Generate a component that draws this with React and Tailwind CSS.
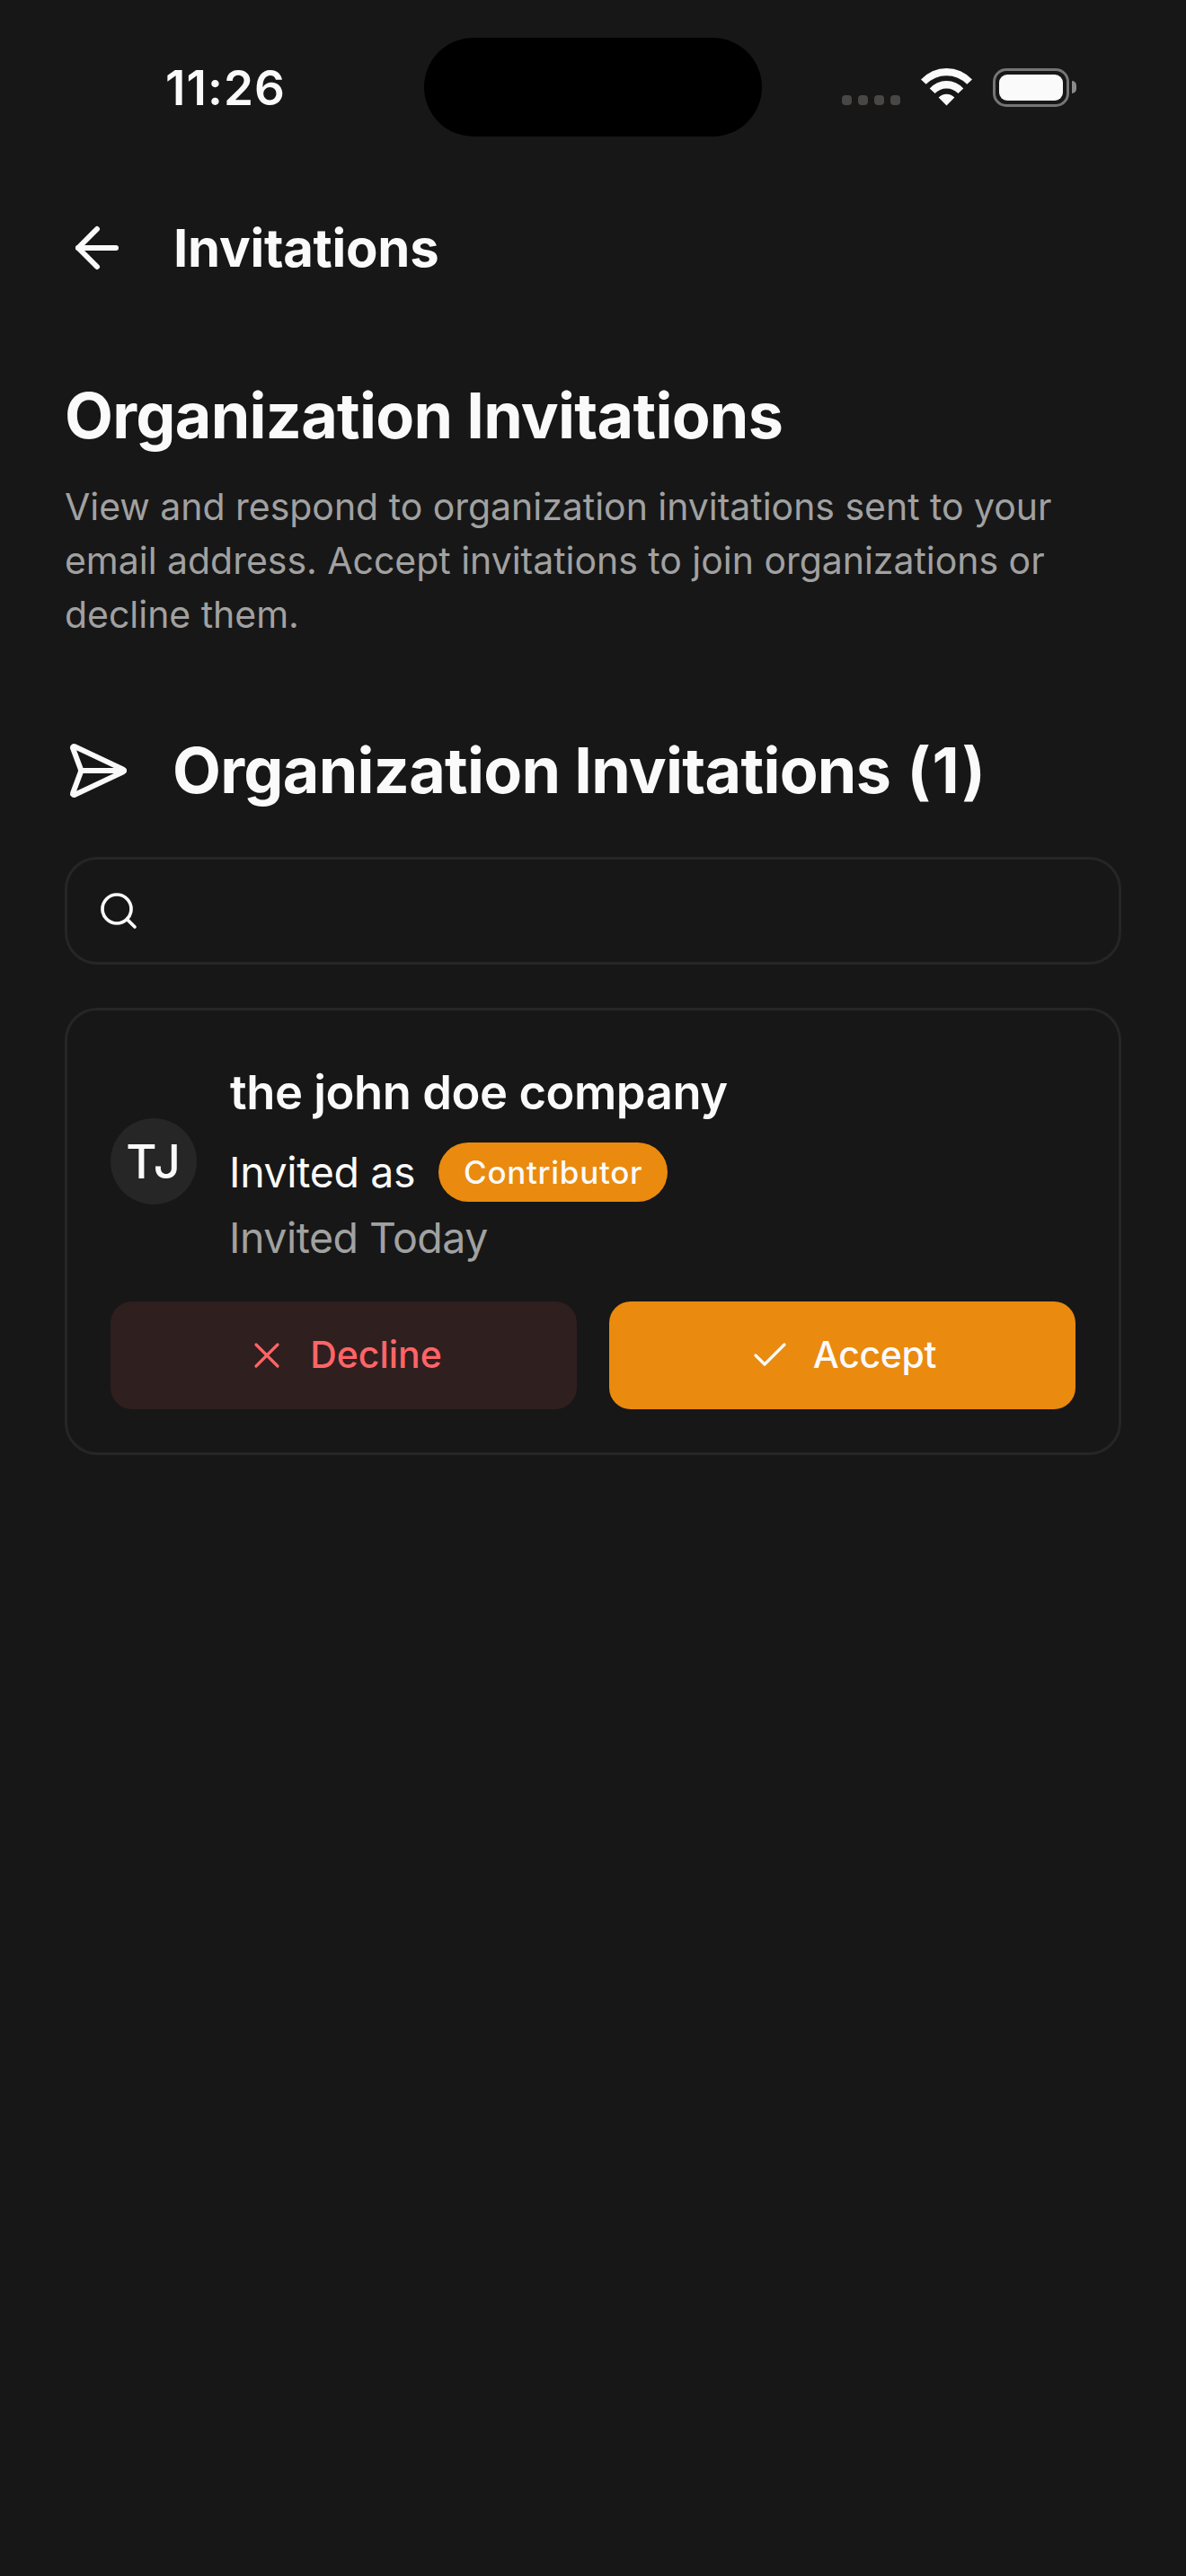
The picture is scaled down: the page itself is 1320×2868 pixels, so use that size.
import React from "react";
import { ArrowLeft, Check, Search, SendHorizontal, X } from "lucide-react";

function WifiIcon() {
  return (
    <svg width="60" height="45" viewBox="0 0 60 45" fill="currentColor">
      <path d="M1 14.6 A38.5 38.5 0 0 1 58 14.6 L52.3 19.8 A32 32 0 0 0 6.7 19.8 Z" />
      <path d="M10.7 24.6 A25 25 0 0 1 48.3 24.6 L42.4 30 A18 18 0 0 0 16.6 30 Z" />
      <path d="M20.6 34.6 A12 12 0 0 1 38.4 34.6 L29.5 43.4 Z" />
    </svg>
  );
}

function Battery() {
  return (
    <div className="flex items-center gap-[3px]">
      <div className="h-[43px] w-[85px] rounded-[15px] border-[3px] border-[#757575] p-1">
        <div className="h-full w-full rounded-[9px] bg-[#fafafa]" />
      </div>
      <div className="h-[14px] w-[5px] rounded-r-full bg-[#8a8a8a]" />
    </div>
  );
}

function StatusBar() {
  return (
    <div className="relative flex h-[240px] items-start justify-between pl-[184px] pr-[122px]">
      <div className="mt-[58px] text-[53px] font-semibold leading-[80px] tracking-[1.06px]">11:26</div>
      <div className="absolute left-[472px] top-[42px] h-[110px] w-[376px] rounded-full bg-black" />
      <div className="mt-[75px] flex">
        <div className="mr-[22px] mt-[31px] flex gap-[7px]">
          {[0, 1, 2, 3].map((i) => (
            <div key={i} className="size-[11px] rounded-[4px] bg-[#484745]" />
          ))}
        </div>
        <div className="-mt-px mr-[21px]">
          <WifiIcon />
        </div>
        <Battery />
      </div>
    </div>
  );
}

export default function App() {
  return (
    <div className="min-h-[2868px] w-[1320px] bg-[#171717] font-['Inter',sans-serif] text-[#fafafa]">
      <StatusBar />

      <header className="flex h-[72px] items-center gap-12 px-[72px]">
        <ArrowLeft size={72} strokeWidth={2} />
        <h1 className="pl-px text-[58px] font-bold leading-[73px] tracking-[-0.25px]">Invitations</h1>
      </header>

      <main className="px-[72px] pt-[115px]">
        <h2 className="text-[70px] font-bold leading-[72px] tracking-[-0.72px]">Organization Invitations</h2>
        <p className="mt-[35px] text-[41px] leading-[60px] tracking-[-0.03px] text-[#a1a1a1]">
          View and respond to organization invitations sent to your
          <br />
          email address. Accept invitations to join organizations or
          <br />
          decline them.
        </p>

        <div className="mt-[108px] flex h-[72px] items-center gap-12">
          <SendHorizontal size={72} strokeWidth={2} />
          <h2 className="whitespace-pre text-[70px] font-bold leading-[72px] tracking-[-0.72px]">
            Organization Invitations<span className="tracking-[1.6px]"> (1)</span>
          </h2>
        </div>

        <div className="mt-[60px] flex h-[120px] items-center rounded-[36px] border-[3px] border-[#262626] px-[33px]">
          <Search size={48} strokeWidth={1.85} />
        </div>

        <section className="mt-12 h-[498px] rounded-[36px] border-[3px] border-[#262626] p-12">
          <div className="flex h-[240px] items-center gap-9">
            <div className="flex size-24 shrink-0 items-center justify-center rounded-full bg-[#262626] text-[52.5px] font-medium leading-none tracking-[0.8px]">
              TJ
            </div>
            <div className="flex h-[240px] flex-col">
              <div className="h-[86px] pl-px text-[52.5px] font-semibold leading-[86px] tracking-[-0.45px]">
                the john doe company
              </div>
              <div className="mt-[13px] flex h-[66px] items-center gap-[26px]">
                <span className="text-[46.5px] leading-[66px] tracking-[-0.36px]">Invited as</span>
                <span className="flex h-[66px] w-[255px] items-center justify-center rounded-full bg-[#ea8a0e] text-[35px] font-medium tracking-[0.7px]">
                  Contributor
                </span>
              </div>
              <div className="mt-[3px] text-[46.5px] leading-[74px] tracking-[-0.5px] text-[#a1a1a1]">
                Invited Today
              </div>
            </div>
          </div>

          <div className="mt-9 grid grid-cols-2 gap-9 text-[41px] font-medium">
            <button className="flex h-[120px] items-center justify-center gap-6 rounded-[24px] bg-[#2f1f1f] tracking-[-0.03px] text-[#ff6467]">
              <X size={48} strokeWidth={1.6} />
              <span>Decline</span>
            </button>
            <button className="flex h-[120px] items-center justify-center gap-6 rounded-[24px] bg-[#ea8a0e] tracking-[-0.34px]">
              <Check size={48} strokeWidth={1.6} />
              <span>Accept</span>
            </button>
          </div>
        </section>
      </main>
    </div>
  );
}
